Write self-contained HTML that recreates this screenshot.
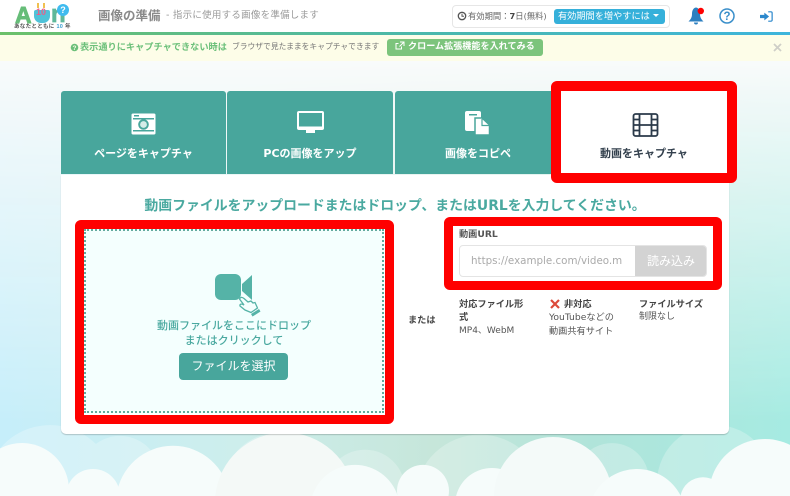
<!DOCTYPE html>
<html lang="ja"><head><meta charset="utf-8">
<style>
*{box-sizing:border-box;margin:0;padding:0}
html,body{width:790px;height:496px;overflow:hidden}
body{position:relative;font-family:"DejaVu Sans","Noto Sans CJK JP",sans-serif;background:#fff}
.a{position:absolute;white-space:nowrap}
.tab{position:absolute;top:91px;height:83px;background:#48a69c;border-radius:3px 3px 0 0}
.tl{position:absolute;left:0;right:0;top:56px;text-align:center;color:#fff;font-size:11px;font-weight:700;line-height:14px}
.rb{position:absolute;border:9px solid #f00;border-radius:6px}
.lg{font-family:"Liberation Sans","Noto Sans CJK JP",sans-serif}
</style></head><body>
<svg class="a" style="left:0;top:0" width="790" height="496" viewBox="0 0 790 496">
<defs>
<linearGradient id="bg2" x1="0" y1="0" x2="1" y2="0">
<stop offset="0" stop-color="#c6eefa"/><stop offset=".3" stop-color="#cdeeec"/><stop offset=".55" stop-color="#c6e6da"/><stop offset=".75" stop-color="#b0e4da"/><stop offset="1" stop-color="#a6ebe2"/></linearGradient>
<linearGradient id="fade2" x1="0" y1="0" x2="0" y2="1"><stop offset=".12" stop-color="#000"/><stop offset=".85" stop-color="#fff"/></linearGradient>
<mask id="m"><rect width="790" height="496" fill="url(#fade2)"/></mask>
</defs>
<rect width="790" height="496" fill="#f9fbfb"/>
<rect width="790" height="496" fill="url(#bg2)" mask="url(#m)"/>
<g fill="#fff" opacity=".25">
<path d="M0 496L0 448.500A65 65 0 0 1 114.700 496Z"/>
<path d="M85.400 496A40 40 0 1 1 154.600 496Z"/>
<path d="M222.300 496A58 58 0 1 1 337.700 496Z"/>
<path d="M325.500 496A40 40 0 1 1 404.500 496Z"/>
<path d="M415.100 496A65 65 0 0 1 544.900 496Z"/>
<path d="M578.600 496A37 37 0 1 1 645.400 496Z"/>
<path d="M658.500 496A58 58 0 1 1 771.500 496Z"/>
</g>
<g fill="#f6fcfb">
<path d="M0 496L0 448.500A47 47 0 0 1 68.600 496Z"/>
<path d="M66 496A27 27 0 1 1 120 496Z"/>
<path d="M116.400 496A57 57 0 0 1 229.600 496Z"/>
<path d="M215.300 496A70 70 0 0 1 354.700 496Z" fill="#f4f9f7"/>
<path d="M312.200 496A45 45 0 0 1 397.800 496Z"/>
<path d="M397.500 496A26 26 0 1 1 448.500 496Z"/>
<path d="M456.100 496A37 37 0 0 1 527.900 496Z"/>
<path d="M494 496A59 59 0 1 1 612 496Z" fill="#f4faf9"/>
<path d="M593.200 496A49 49 0 0 1 680.800 496Z"/>
<path d="M680.400 496A23 23 0 0 1 725.600 496Z"/>
<path d="M709 496A56 56 0 0 1 790 444.900L790 496Z"/>
</g>
</svg>

<!-- header -->
<div class="a" style="left:0;top:0;width:790px;height:32px;background:#fff"></div>
<div class="a" style="left:0;top:32px;width:790px;height:3px;background:linear-gradient(90deg,#6cc06a,#4cb8a8 50%,#3db5dc)"></div>
<div class="a" style="left:0;top:35px;width:790px;height:26px;background:#fdfde8"></div>

<!-- logo -->
<div class="a lg" style="left:15px;top:3.500px;font-size:23px;line-height:23px;font-weight:700;color:#66bd78;-webkit-text-stroke:.9px #66bd78">A</div>
<div class="a" style="left:34px;top:10px;width:16px;height:13px;background:#4fc2d8;border-radius:2px 2px 7px 7px"></div>
<div class="a lg" style="left:36px;top:7px;font-size:9px;font-weight:700;color:#e8608a;line-height:10px">10</div>
<div class="a" style="left:37px;top:3px;width:2px;height:5px;background:#f0c050"></div>
<div class="a" style="left:43px;top:3px;width:2px;height:5px;background:#f0c050"></div>
<div class="a lg" style="left:51px;top:3px;font-size:24px;line-height:24px;font-weight:700;color:#5fb89a;-webkit-text-stroke:.7px #5fb89a">n</div>
<div class="a lg" style="left:57px;top:4px;width:12px;height:12px;border-radius:50%;background:#3fbbef;color:#fff;font-size:9px;line-height:12px;text-align:center;font-weight:700">?</div>
<div class="a lg" style="left:14px;top:24px;font-size:5.500px;line-height:6px;color:#555;font-weight:700;letter-spacing:.3px">あなたとともに <span style="color:#3a9fd0">10</span> 年</div>

<div class="a" style="left:98px;top:8px;font-size:12.500px;line-height:16px;font-weight:700;color:#8a8a8a">画像の準備</div>
<div class="a" style="left:166px;top:9px;font-size:9.500px;line-height:14px;color:#9a9a9a;letter-spacing:.24px">- 指示に使用する画像を準備します</div>

<div class="a" style="left:452px;top:5px;width:218px;height:23px;border:1px solid #e6e6e6;border-radius:4px;background:#fff"></div>
<svg class="a" style="left:457px;top:11px" width="10" height="10" viewBox="0 0 10 10"><circle cx="5" cy="5" r="3.700" fill="none" stroke="#555" stroke-width="1.300"/><path d="M5 2.800V5.200H7" fill="none" stroke="#555" stroke-width="1"/></svg>
<div class="a" style="left:468px;top:9px;font-size:8.300px;line-height:14px;color:#666">有効期間：<b style="color:#444">7</b>日(無料)</div>
<div class="a" style="left:554px;top:9px;width:111px;height:15px;background:#35b0da;border-radius:3px;color:#fff;font-size:9.200px;line-height:15px;padding-left:4px">有効期間を増やすには<span style="display:inline-block;margin-left:3px;vertical-align:2px;border:3px solid transparent;border-top:3px solid #fff;border-bottom:0"></span></div>

<svg class="a" style="left:688px;top:6px" width="20" height="20" viewBox="0 0 20 20"><path d="M8 1.500C5 2 4 5 4 8C4 11 3 13 .5 15.500H15.500C13 13 12 11 12 8C12 5 11 2 8 1.500Z" fill="#2c7fc0"/><path d="M6 16.500H10A2 2 0 0 1 6 16.500Z" fill="#2c7fc0"/><circle cx="12.800" cy="5" r="3.200" fill="#f00"/></svg>
<svg class="a" style="left:719px;top:8px" width="16" height="16" viewBox="0 0 16 16"><circle cx="8" cy="8" r="7" fill="none" stroke="#3a8fca" stroke-width="1.500"/><text x="8" y="12" font-size="11.500" font-weight="700" fill="#3a8fca" text-anchor="middle" font-family="Liberation Sans">?</text></svg>
<svg class="a" style="left:760px;top:11px" width="13" height="11" viewBox="0 0 15 14" preserveAspectRatio="none"><path d="M0 5H5V2L10.500 7L5 12V9H0Z" fill="#2c88cc"/><path d="M9.500 1H12.500Q14 1 14 2.500V11.500Q14 13 12.500 13H9.500" fill="none" stroke="#2c88cc" stroke-width="1.400"/></svg>

<!-- notice -->
<svg class="a" style="left:70px;top:43px" width="9" height="9" viewBox="0 0 9 9"><circle cx="4.500" cy="4.500" r="3.800" fill="#6cc07a"/><text x="4.500" y="7" font-size="6.500" font-weight="700" fill="#fdfde8" text-anchor="middle" font-family="Liberation Sans">?</text></svg>
<div class="a" style="left:80px;top:40px;font-size:9.200px;line-height:15px;font-weight:700;color:#6cc07a">表示通りにキャプチャできない時は</div>
<div class="a" style="left:232px;top:40px;font-size:7.770px;line-height:14px;color:#777">ブラウザで見たままをキャプチャできます</div>
<div class="a" style="left:387px;top:39px;width:156px;height:17px;background:#7cc47c;border-radius:3px;color:#fff;font-size:9.100px;line-height:17px;padding-left:8px;font-weight:700">
<svg style="vertical-align:-1px;margin-right:3px" width="10" height="9" viewBox="0 0 10 9"><path d="M6.500 5.500V8H1V2.500H3.500M5 1H9V5M9 1L4.500 5.500" fill="none" stroke="#fff" stroke-width="1"/></svg>クローム拡張機能を入れてみる</div>
<svg class="a" style="left:773px;top:43px" width="9" height="9" viewBox="0 0 9 9"><path d="M1 1L8 8M8 1L1 8" stroke="#cfcfc8" stroke-width="1.800"/></svg>

<!-- tabs -->
<div class="tab" style="left:61px;width:165px"><div class="tl">ページをキャプチャ</div>
<svg class="a" style="left:70px;top:22px" width="25" height="22" viewBox="0 0 25 22"><rect x=".5" y=".5" width="24" height="21" rx="1.500" fill="#fff"/><rect x="2" y="5" width="21" height="1.500" fill="#48a69c"/><rect x="2" y="17" width="21" height="1.500" fill="#48a69c"/><rect x="3" y="2" width="5" height="1.500" fill="#48a69c"/><circle cx="12.500" cy="11.500" r="5.300" fill="#48a69c"/><circle cx="12.500" cy="11.500" r="3.400" fill="#d5ece8"/></svg></div>
<div class="tab" style="left:227px;width:166px"><div class="tl">PCの画像をアップ</div>
<svg class="a" style="left:70px;top:20px" width="27" height="24" viewBox="0 0 27 24"><path d="M2 0H25Q27 0 27 2V17Q27 19 25 19H2Q0 19 0 17V2Q0 0 2 0Z" fill="#fff"/><rect x="2" y="2" width="23" height="13.500" fill="#48a69c"/><rect x="9" y="19" width="9" height="3" fill="#fff"/></svg></div>
<div class="tab" style="left:395px;width:166px"><div class="tl">画像をコピペ</div>
<svg class="a" style="left:70px;top:20px" width="26" height="25" viewBox="0 0 26 25"><path d="M2 0H14Q16 0 16 2V20H2Q0 20 0 18V2Q0 0 2 0Z" fill="#fff"/><rect x="4" y="3" width="8" height="1.500" fill="#48a69c"/><path d="M10 7H17L24.500 14V24H10Z" fill="#fff" stroke="#48a69c" stroke-width="1.500"/><path d="M17 8V14.500H24" fill="none" stroke="#48a69c" stroke-width="1.200"/></svg></div>

<!-- card -->
<div class="a" style="left:61px;top:175px;width:668px;height:259px;background:#fff;border-radius:0 0 5px 5px;box-shadow:0 1px 1px rgba(0,0,0,.2)"></div>
<div class="a" style="left:561px;top:91px;width:166px;height:84px;background:#fff"></div>

<svg class="a" style="left:632px;top:113px" width="27" height="24" viewBox="0 0 27 24"><rect x="1.500" y="1" width="24" height="22" rx="2" fill="none" stroke="#2b3a4a" stroke-width="1.800"/><path d="M7.500 1V23M19.500 1V23M7.500 12H19.500M1.500 6.500H7.500M1.500 12H7.500M1.500 17.500H7.500M19.500 6.500H25.500M19.500 12H25.500M19.500 17.500H25.500" stroke="#2b3a4a" stroke-width="1.800" fill="none"/></svg>
<div class="a" style="left:561px;top:147px;width:166px;text-align:center;font-size:11px;line-height:14px;font-weight:700;color:#33404d">動画をキャプチャ</div>

<div class="a" style="left:61px;top:196px;width:668px;text-align:center;font-size:13.880px;line-height:20px;font-weight:700;color:#4aa9a0">動画ファイルをアップロードまたはドロップ、またはURLを入力してください。</div>

<!-- drop zone -->
<div class="a" style="left:84px;top:229px;width:300px;height:184px;background:#f4fffe;border:2px dotted #62ab9f"></div>
<svg class="a" style="left:214px;top:273px" width="48" height="46" viewBox="0 0 48 46"><rect x="1" y="1" width="26" height="26" rx="6" fill="#55b3a7"/><path d="M28 11L38 2V27L28 18Z" fill="#55b3a7"/><path d="M25.500 26Q27 23 30 25.500L34 29L37 28L39 30L41 29.500L43.500 35L37 39.500L31 37L26 33Q25.500 31 28 31L30 32Z" fill="#f4fffe" stroke="#55b3a7" stroke-width="1.300"/><path d="M37 41L45 36L46.500 38.500L38.500 43.500Z" fill="#55b3a7"/></svg>
<div class="a" style="left:84px;top:319px;width:300px;text-align:center;font-size:11px;line-height:14px;font-weight:500;color:#4aa9a0">動画ファイルをここにドロップ</div>
<div class="a" style="left:84px;top:334px;width:300px;text-align:center;font-size:11px;line-height:14px;font-weight:500;color:#4aa9a0">またはクリックして</div>
<div class="a" style="left:179px;top:353px;width:109px;height:27px;background:#48a69c;border-radius:4px;color:#fff;font-size:12px;line-height:27px;text-align:center">ファイルを選択</div>

<!-- url -->
<div class="a" style="left:459px;top:228px;font-size:9.200px;line-height:14px;font-weight:700;color:#555">動画URL</div>
<div class="a" style="left:459px;top:245px;width:248px;height:32px;border:1px solid #e4e4e4;border-radius:4px;background:#fff;overflow:hidden">
<div class="a" style="left:11px;top:8px;line-height:15px;color:#aaa;font-size:10.300px">https://example.com/video.m</div>
<div class="a" style="left:175px;top:0;width:72px;height:30px;background:#d3d3d3;color:#fff;font-size:12px;line-height:30px;text-align:center">読み込み</div></div>

<div class="a" style="left:408px;top:314px;font-size:9.200px;line-height:14px;font-weight:700;color:#444">または</div>
<div class="a" style="left:459px;top:298px;font-size:9.200px;line-height:13px;font-weight:700;color:#444">対応ファイル形<br>式</div>
<div class="a" style="left:459px;top:325px;font-size:9px;line-height:13px;color:#555">MP4、WebM</div>
<svg class="a" style="left:550px;top:299px" width="10" height="10" viewBox="0 0 10 10"><path d="M1 1L9 9M9 1L1 9" stroke="#dc4a3a" stroke-width="2.200"/></svg>
<div class="a" style="left:564px;top:298px;font-size:9.200px;line-height:13px;font-weight:700;color:#444">非対応</div>
<div class="a" style="left:549px;top:311px;font-size:9.200px;line-height:13px;color:#555">YouTubeなどの</div>
<div class="a" style="left:549px;top:325px;font-size:9.200px;line-height:13px;color:#555">動画共有サイト</div>
<div class="a" style="left:639px;top:298px;font-size:9.200px;line-height:13px;font-weight:700;color:#444">ファイルサイズ</div>
<div class="a" style="left:639px;top:311px;font-size:9px;line-height:13px;color:#555">制限なし</div>

<!-- red boxes -->
<div class="rb" style="left:551px;top:81px;width:186px;height:102px;border-width:10px"></div>
<div class="rb" style="left:74.500px;top:220px;width:319px;height:204px"></div>
<div class="rb" style="left:444px;top:217px;width:278px;height:73px"></div>
</body></html>
